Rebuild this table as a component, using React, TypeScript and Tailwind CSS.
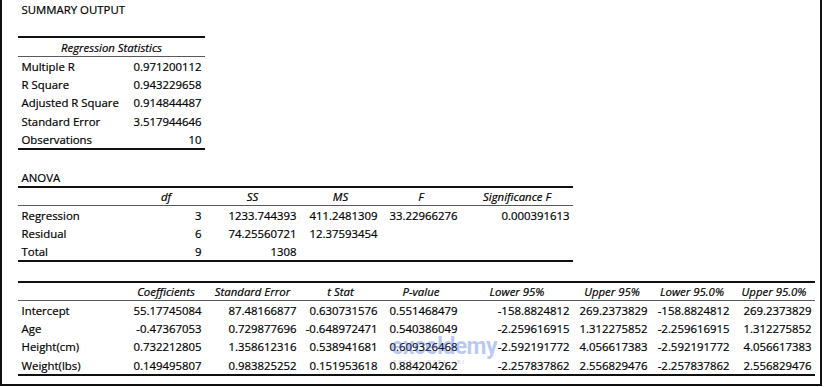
const COLS = ['w-[109px]', 'w-[78px]', 'w-[95px]', 'w-[81px]', 'w-[80px]', 'w-[112px]', 'w-[78px]', 'w-[82px]', 'w-[82px]'];

const regStats: [string, string][] = [
  ['Multiple R', '0.971200112'],
  ['R Square', '0.943229658'],
  ['Adjusted R Square', '0.914844487'],
  ['Standard Error', '3.517944646'],
  ['Observations', '10'],
];

const anovaHead = ['', 'df', 'SS', 'MS', 'F', 'Significance F'];
const anovaRows = [
  ['Regression', '3', '1233.744393', '411.2481309', '33.22966276', '0.000391613'],
  ['Residual', '6', '74.25560721', '12.37593454', '', ''],
  ['Total', '9', '1308', '', '', ''],
];

const coefHead = ['', 'Coefficients', 'Standard Error', 't Stat', 'P-value', 'Lower 95%', 'Upper 95%', 'Lower 95.0%', 'Upper 95.0%'];
const coefRows = [
  ['Intercept', '55.17745084', '87.48166877', '0.630731576', '0.551468479', '-158.8824812', '269.2373829', '-158.8824812', '269.2373829'],
  ['Age', '-0.47367053', '0.729877696', '-0.648972471', '0.540386049', '-2.259616915', '1.312275852', '-2.259616915', '1.312275852'],
  ['Height(cm)', '0.732212805', '1.358612316', '0.538941681', '0.609326468', '-2.592191772', '4.056617383', '-2.592191772', '4.056617383'],
  ['Weight(lbs)', '0.149495807', '0.983825252', '0.151953618', '0.884204262', '-2.257837862', '2.556829476', '-2.257837862', '2.556829476'],
];

function HeadRow({ cells }: { cells: string[] }) {
  return (
    <div className="flex h-[18px] items-end border-b border-[#5a5a5a]">
      {cells.map((c, i) => (
        <div key={i} className={`${COLS[i]} shrink-0 px-[3px] pb-[1px] text-center italic leading-[15px]`}>
          {c}
        </div>
      ))}
    </div>
  );
}

function DataRow({ cells, h }: { cells: string[]; h: string }) {
  return (
    <div className={`flex items-end ${h}`}>
      {cells.map((c, i) => (
        <div
          key={i}
          className={`${COLS[i]} shrink-0 whitespace-nowrap px-[3.5px] pb-[1px] leading-[15px] ${i === 0 ? 'text-left' : 'text-right'}`}
        >
          {c}
        </div>
      ))}
    </div>
  );
}

export default function App() {
  return (
    <div className="h-[387px] w-[824px] bg-white">
      <div className="relative h-[386px] w-[822px] border-b-2 border-l-2 border-r-2 border-[#111] pl-[16px] font-['Open_Sans',sans-serif] text-[11.4px] font-medium text-black [-webkit-text-stroke:0.2px_#000]">
        {/* title */}
        <div className="flex h-[18px] items-end px-[3.5px] pb-[1px] leading-[15px]">SUMMARY OUTPUT</div>

        {/* regression statistics */}
        <div className="mt-[18px] w-fit border-b-2 border-t-2 border-[#111]">
          <div className="flex h-[18.5px] items-end border-b border-[#5a5a5a]">
            <div className="w-[187px] pb-[1px] text-center italic leading-[15px]">Regression Statistics</div>
          </div>
          {regStats.map((r) => (
            <DataRow key={r[0]} cells={r} h="h-[18.3px]" />
          ))}
        </div>

        {/* anova */}
        <div className="mt-[18px] flex h-[18.5px] items-end px-[3.5px] pb-[1px] leading-[15px]">ANOVA</div>
        <div className="w-fit border-b-2 border-t-2 border-[#111]">
          <HeadRow cells={anovaHead} />
          {anovaRows.map((r) => (
            <DataRow key={r[0]} cells={r} h="h-[17.7px]" />
          ))}
        </div>

        {/* coefficients */}
        <div className="mt-[19px] w-fit border-b-2 border-t-2 border-[#111]">
          <HeadRow cells={coefHead} />
          {coefRows.map((r) => (
            <DataRow key={r[0]} cells={r} h="h-[18.3px]" />
          ))}
        </div>

        {/* watermark */}
        <div className="pointer-events-none absolute left-[389px] top-[334px] flex flex-col items-start [-webkit-text-stroke:0]">
          <span className="font-['Roboto',sans-serif] text-[23px] font-bold leading-[26px] tracking-[-0.6px] text-[rgba(70,110,230,0.38)]">
            exceldemy
          </span>
          <span className="-mt-[2px] ml-[2px] font-['Roboto',sans-serif] text-[6px] font-normal leading-[7px] tracking-[1.5px] text-[rgba(120,120,120,0.4)]">
            EXCEL · DATA · BI
          </span>
        </div>
      </div>
    </div>
  );
}
